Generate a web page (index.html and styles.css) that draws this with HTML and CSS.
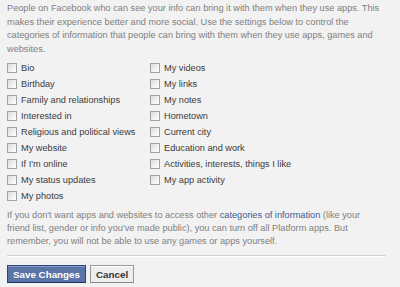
FILE: index.html
```html
<!DOCTYPE html>
<html lang="en">
<head>
    <meta charset="UTF-8">
    <title>Info accessible through your friends</title>
    <link rel="stylesheet" href="styles.css">
</head>
<body>
    <div class="settings-panel">
        <p class="intro-text">
            People on Facebook who can see your info can bring it with them when they use apps. This makes their experience better and more social. Use the settings below to control the categories of information that people can bring with them when they use apps, games and websites.
        </p>

        <div class="option-list">
            <div class="option-column">
                <label class="option"><input type="checkbox"> Bio</label>
                <label class="option"><input type="checkbox"> Birthday</label>
                <label class="option"><input type="checkbox"> Family and relationships</label>
                <label class="option"><input type="checkbox"> Interested in</label>
                <label class="option"><input type="checkbox"> Religious and political views</label>
                <label class="option"><input type="checkbox"> My website</label>
                <label class="option"><input type="checkbox"> If I'm online</label>
                <label class="option"><input type="checkbox"> My status updates</label>
                <label class="option"><input type="checkbox"> My photos</label>
            </div>
            <div class="option-column">
                <label class="option"><input type="checkbox"> My videos</label>
                <label class="option"><input type="checkbox"> My links</label>
                <label class="option"><input type="checkbox"> My notes</label>
                <label class="option"><input type="checkbox"> Hometown</label>
                <label class="option"><input type="checkbox"> Current city</label>
                <label class="option"><input type="checkbox"> Education and work</label>
                <label class="option"><input type="checkbox"> Activities, interests, things I like</label>
                <label class="option"><input type="checkbox"> My app activity</label>
            </div>
        </div>

        <p class="note-text">
            If you don't want apps and websites to access other <a href="#" class="link">categories of information</a> (like your friend list, gender or info you've made public), you can turn off all Platform apps. But remember, you will not be able to use any games or apps yourself.
        </p>

        <div class="button-bar">
            <button class="btn btn-confirm">Save Changes</button>
            <button class="btn btn-cancel">Cancel</button>
        </div>
    </div>
</body>
</html>
```

FILE: styles.css
```css
* {
    margin: 0;
    padding: 0;
    box-sizing: border-box;
    font-family: 'Liberation Sans', Arial, sans-serif;
}

body {
    background-color: #f2f2f2;
}

.settings-panel {
    padding: 2px 14px 0 7px;
    font-size: 9.2px;
}

.intro-text {
    color: #808080;
    line-height: 13.5px;
}

.option-list {
    display: flex;
    margin-top: 4px;
}

.option-column {
    display: flex;
    flex-direction: column;
    width: 143px;
}

.option {
    display: flex;
    align-items: center;
    height: 16px;
    color: #3a3a3a;
    white-space: nowrap;
}

.option input {
    appearance: none;
    -webkit-appearance: none;
    width: 10px;
    height: 10px;
    margin: 0 4px 0 0;
    border: 1px solid #a3a3a3;
    background: linear-gradient(135deg, #dcdcdc, #f3f3f3 65%, #fff);
}

.note-text {
    margin-top: 5px;
    padding-right: 4px;
    color: #808080;
    line-height: 13px;
    padding-bottom: 7px;
    border-bottom: 1px solid #d3d3d3;
    box-shadow: 0 1px 0 #fff;
}

.link {
    color: #3b5998;
    text-decoration: none;
}

.button-bar {
    display: flex;
    gap: 4px;
    margin-top: 9px;
}

.btn {
    height: 18px;
    padding: 0 5px;
    border: 1px solid #999;
    font-size: 9.8px;
    font-weight: bold;
    cursor: pointer;
}

.btn-confirm {
    background-color: #5b74a8;
    border-color: #29447e #29447e #1a356e;
    box-shadow: inset 0 1px 0 #8a9cc2;
    color: #fff;
}

.btn-cancel {
    background-color: #eee;
    border-color: #999 #999 #888;
    box-shadow: inset 0 1px 0 #fff;
    color: #333;
}
```
